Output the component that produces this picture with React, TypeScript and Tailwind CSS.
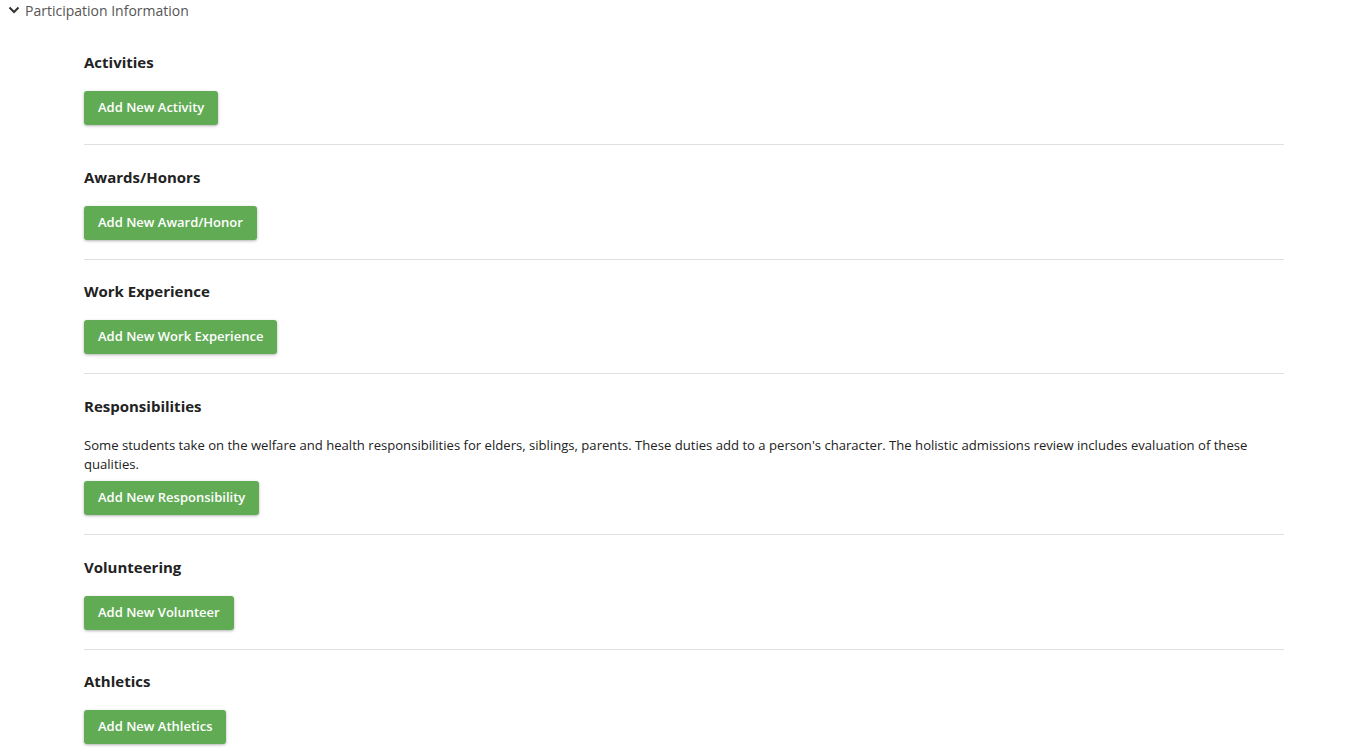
const sections = [
  { title: "Activities", button: "Add New Activity" },
  { title: "Awards/Honors", button: "Add New Award/Honor" },
  { title: "Work Experience", button: "Add New Work Experience" },
  {
    title: "Responsibilities",
    button: "Add New Responsibility",
    note: "Some students take on the welfare and health responsibilities for elders, siblings, parents. These duties add to a person's character. The holistic admissions review includes evaluation of these qualities.",
  },
  { title: "Volunteering", button: "Add New Volunteer" },
  { title: "Athletics", button: "Add New Athletics" },
];

export default function App() {
  return (
    <div className="w-full min-h-screen bg-white font-['Open_Sans',sans-serif] text-[#222]">
      <div className="flex items-center gap-[5px] pl-[8px] h-[20px]">
        <svg width="12" height="12" viewBox="0 0 12 12" className="text-[#333]">
          <path d="M1.5 3.5 L6 8 L10.5 3.5" fill="none" stroke="currentColor" strokeWidth="2" />
        </svg>
        <span className="text-[14px] text-[#555]">Participation Information</span>
      </div>

      <div className="ml-[84px] w-[1200px] pt-[32px]">
        {sections.map((s, i) => (
          <div key={s.title} className={i > 0 ? "border-t border-[#e0e0e0] pt-[21.5px]" : "pt-0"}>
            <h3 className="text-[15px] font-bold leading-[20px]">{s.title}</h3>
            {s.note ? (
              <p className="mt-[20px] text-[13.1px] leading-[19px] text-[#222]">{s.note}</p>
            ) : null}
            <button
              className={
                (s.note ? "mt-[7.6px] " : "mt-[19px] ") +
                "h-[34px] px-[14px] rounded-[3px] bg-[#62ab55] text-white text-[13px] font-semibold shadow-[0_1px_3px_rgba(0,0,0,0.3)] mb-[19px]"
              }
            >
              {s.button}
            </button>
          </div>
        ))}
      </div>
    </div>
  );
}
